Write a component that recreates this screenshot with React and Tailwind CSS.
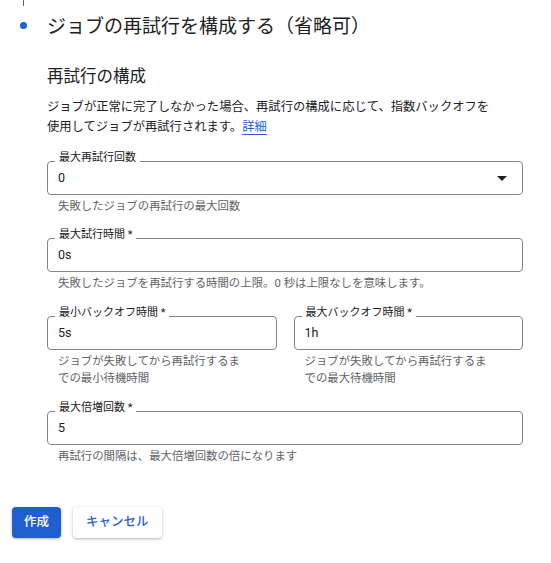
import React from 'react';

function Field({ label, value, helper, select, className = '' }) {
  return (
    <div className={className}>
      <div className="relative h-[34px] rounded-[4px] border border-[#80868b] flex items-center pl-[10px] pr-[15px]">
        <span className="absolute -top-[10px] left-[7px] bg-white px-[4px] text-[11px] leading-[12px] text-[#202124]">{label}</span>
        <span className="flex-1 text-[12.5px] text-[#202124]">{value}</span>
        {select && (
          <svg width="10" height="5" viewBox="0 0 10 5" className="text-[#202124]">
            <path d="M0 0h10L5 5z" fill="currentColor" />
          </svg>
        )}
      </div>
      {helper && <p className="mt-[3px] pl-[11px] text-[11.4px] leading-[17px] text-[#5f6368]">{helper}</p>}
    </div>
  );
}

export default function App() {
  return (
    <div className="w-[551px] h-[563px] bg-white font-['Roboto','Noto_Sans_CJK_JP',sans-serif] text-[#202124]">
      <div className="flex">
        {/* stepper rail */}
        <div className="w-[46px] flex flex-col items-center shrink-0">
          <div className="w-px h-[6px] bg-[#5f6368]" />
          <div className="mt-[16px] w-[7px] h-[7px] rounded-full bg-[#1f5fd0]" />
        </div>

        <div className="flex-1 pl-[1px] pr-[28px]">
          <h1 className="pt-[13px] text-[19px] leading-[28px] font-normal">ジョブの再試行を構成する（省略可）</h1>

          <h2 className="mt-[24px] text-[16.5px] leading-[24px] font-normal">再試行の構成</h2>
          <p className="mt-[8px] text-[12.3px] leading-[20px] text-[#202124]">
            ジョブが正常に完了しなかった場合、再試行の構成に応じて、指数バックオフを<br />
            使用してジョブが再試行されます。<a className="text-[#1f5fd0] underline underline-offset-[3px]">詳細</a>
          </p>

          <Field className="mt-[24px]" label="最大再試行回数" value="0" select helper="失敗したジョブの再試行の最大回数" />
          <Field className="mt-[23px]" label="最大試行時間 *" value="0s" helper="失敗したジョブを再試行する時間の上限。0 秒は上限なしを意味します。" />

          <div className="mt-[24px] grid grid-cols-2 gap-[17px]">
            <Field label="最小バックオフ時間 *" value="5s" helper={<>ジョブが失敗してから再試行するま<br />での最小待機時間</>} />
            <Field label="最大バックオフ時間 *" value="1h" helper={<>ジョブが失敗してから再試行するま<br />での最大待機時間</>} />
          </div>

          <Field className="mt-[24px]" label="最大倍増回数 *" value="5" helper="再試行の間隔は、最大倍増回数の倍になります" />
        </div>
      </div>

      <div className="mt-[42px] pl-[12px] flex gap-[12px]">
        <button className="h-[31px] px-[12px] rounded-[4px] bg-[#1f5fd0] text-white text-[12.5px] font-medium shadow-[0_1px_3px_rgba(0,0,0,0.3)]">作成</button>
        <button className="h-[31px] px-[13px] rounded-[4px] bg-white text-[#1f5fd0] text-[12.5px] font-medium shadow-[0_1px_3px_rgba(0,0,0,0.3)]">キャンセル</button>
      </div>
    </div>
  );
}
